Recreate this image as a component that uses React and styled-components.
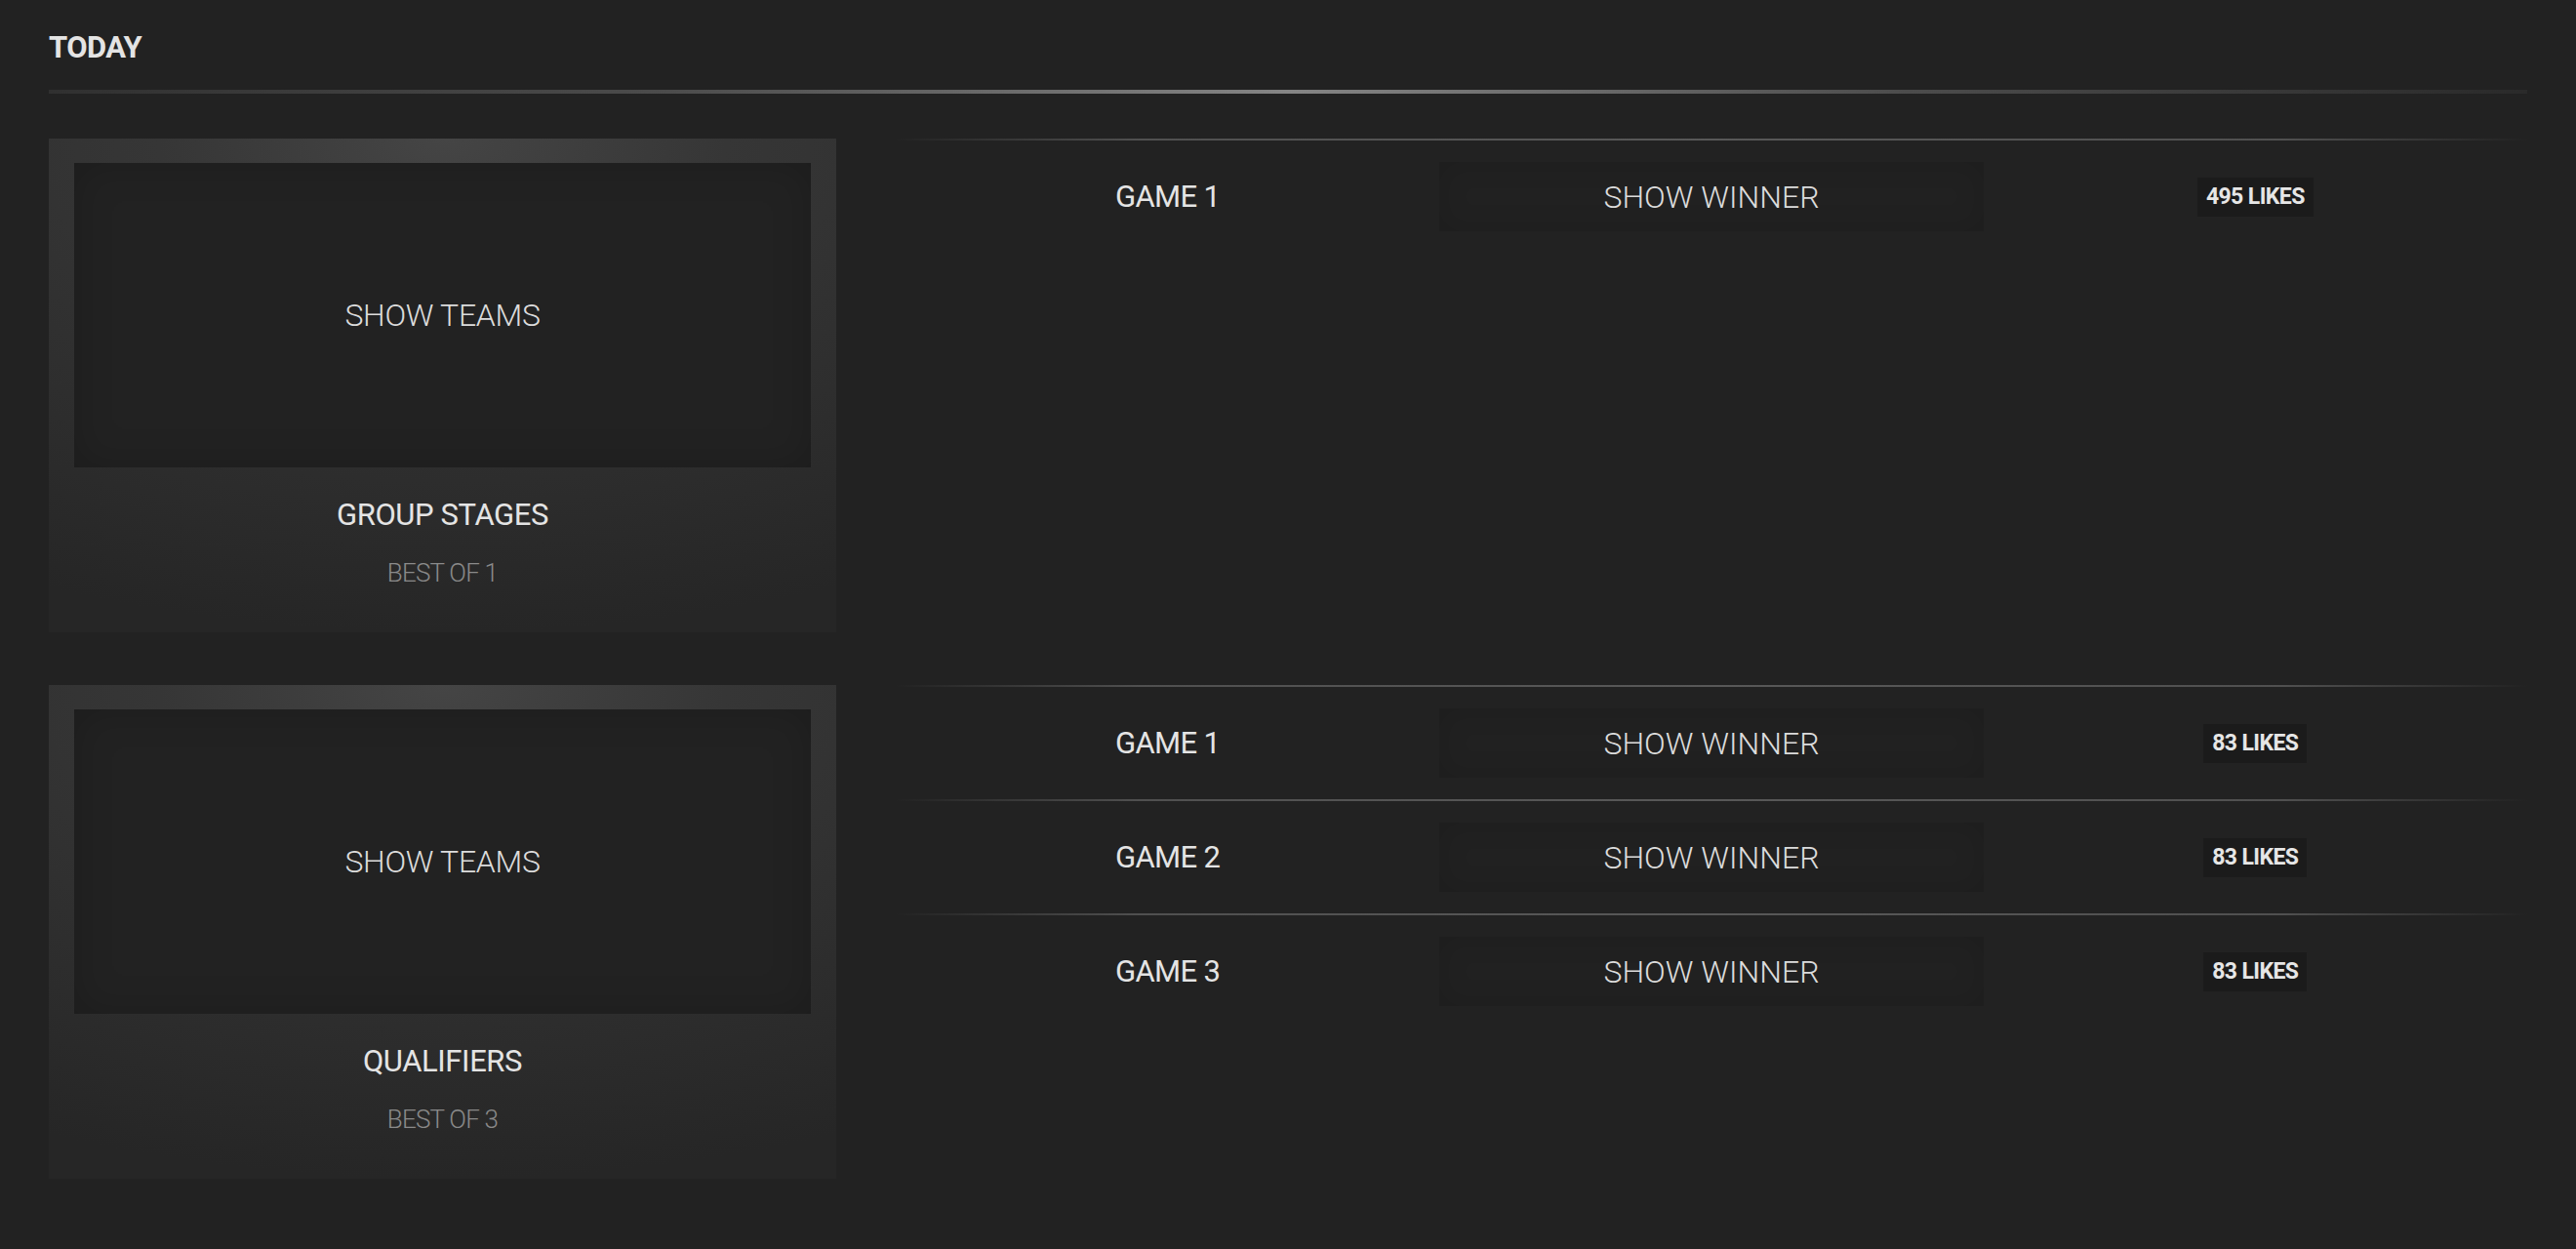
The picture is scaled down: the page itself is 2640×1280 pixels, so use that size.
import React from "react";
import styled, { createGlobalStyle } from "styled-components";

const GlobalStyle = createGlobalStyle`
  html, body {
    margin: 0;
    padding: 0;
    background: #222222;
  }
  * {
    box-sizing: border-box;
  }
`;

const font = `Roboto, "Liberation Sans", sans-serif`;

const Page = styled.div`
  min-height: 1280px;
  padding: 30px 50px 40px;
  background: #222222;
  color: #e2e2e2;
  font-family: ${font};
`;

const Heading = styled.h2`
  margin: 0;
  font-size: 31px;
  line-height: 38px;
  font-weight: 700;
  letter-spacing: -0.6px;
  color: #e4e4e4;
`;

const Divider = styled.div`
  height: 4px;
  margin: 24px 0 46px;
  background: linear-gradient(
    to right,
    #303030 0%,
    #4c4c4c 25%,
    #858585 50%,
    #4c4c4c 75%,
    #2a2a2a 100%
  );
  filter: blur(0.7px);
`;

const Section = styled.section`
  display: flex;
  align-items: flex-start;
  gap: 61px;
  margin-bottom: 54px;
`;

const StageCard = styled.div`
  flex: 0 0 807px;
  display: flex;
  flex-direction: column;
  align-items: center;
  padding: 25px 26px 46px;
  background: radial-gradient(
    120% 100% at 50% 0%,
    #454545 0%,
    #363636 30%,
    #2e2e2e 65%,
    #262626 100%
  );
`;

const TeamsBox = styled.div`
  width: 100%;
  height: 312px;
  display: flex;
  align-items: center;
  justify-content: center;
  background: #222222;
  box-shadow: inset 0 0 40px rgba(0, 0, 0, 0.18);
  font-weight: 300;
  font-size: 32px;
  letter-spacing: -0.3px;
  color: #dcdcdc;
  cursor: pointer;
`;

const StageName = styled.div`
  margin-top: 30px;
  font-size: 31px;
  line-height: 38px;
  letter-spacing: -0.4px;
  color: #e4e4e4;
`;

const BestOf = styled.div`
  margin-top: 25px;
  font-weight: 300;
  font-size: 26px;
  line-height: 30px;
  letter-spacing: -0.8px;
  color: #8a8a8a;
`;

const Games = styled.div`
  flex: 1;
  display: flex;
  flex-direction: column;
`;

const GameRow = styled.div`
  display: grid;
  grid-template-columns: repeat(3, 1fr);
  align-items: center;
  padding: 22px 0;
  border-top: 2px solid transparent;
  border-image: linear-gradient(
      to right,
      rgba(85, 85, 85, 0) 0%,
      #505050 15%,
      #585858 50%,
      #505050 85%,
      rgba(85, 85, 85, 0) 100%
    )
    1;
`;

const GameLabel = styled.div`
  text-align: center;
  font-size: 31px;
  letter-spacing: -0.6px;
  color: #e4e4e4;
`;

const WinnerButton = styled.div`
  height: 71px;
  display: flex;
  align-items: center;
  justify-content: center;
  background: #212121;
  box-shadow: inset 0 0 30px rgba(0, 0, 0, 0.12);
  font-weight: 300;
  font-size: 32px;
  color: #dcdcdc;
  cursor: pointer;
`;

const LikesCell = styled.div`
  display: flex;
  justify-content: center;
`;

const LikesBadge = styled.span`
  padding: 0 9px;
  height: 40px;
  display: inline-flex;
  align-items: center;
  background: #1b1b1b;
  font-weight: 700;
  font-size: 23px;
  letter-spacing: -0.6px;
  color: #e6e6e6;
`;

const stages = [
  {
    name: "GROUP STAGES",
    best: 1,
    games: [{ n: 1, likes: 495 }]
  },
  {
    name: "QUALIFIERS",
    best: 3,
    games: [
      { n: 1, likes: 83 },
      { n: 2, likes: 83 },
      { n: 3, likes: 83 }
    ]
  }
];

function App() {
  return (
    <Page>
      <GlobalStyle />
      <Heading>TODAY</Heading>
      <Divider />
      {stages.map(stage => (
        <Section key={stage.name}>
          <StageCard>
            <TeamsBox>SHOW TEAMS</TeamsBox>
            <StageName>{stage.name}</StageName>
            <BestOf>BEST OF {stage.best}</BestOf>
          </StageCard>
          <Games>
            {stage.games.map(game => (
              <GameRow key={game.n}>
                <GameLabel>GAME {game.n}</GameLabel>
                <WinnerButton>SHOW WINNER</WinnerButton>
                <LikesCell>
                  <LikesBadge>{game.likes} LIKES</LikesBadge>
                </LikesCell>
              </GameRow>
            ))}
          </Games>
        </Section>
      ))}
    </Page>
  );
}

export default App;
